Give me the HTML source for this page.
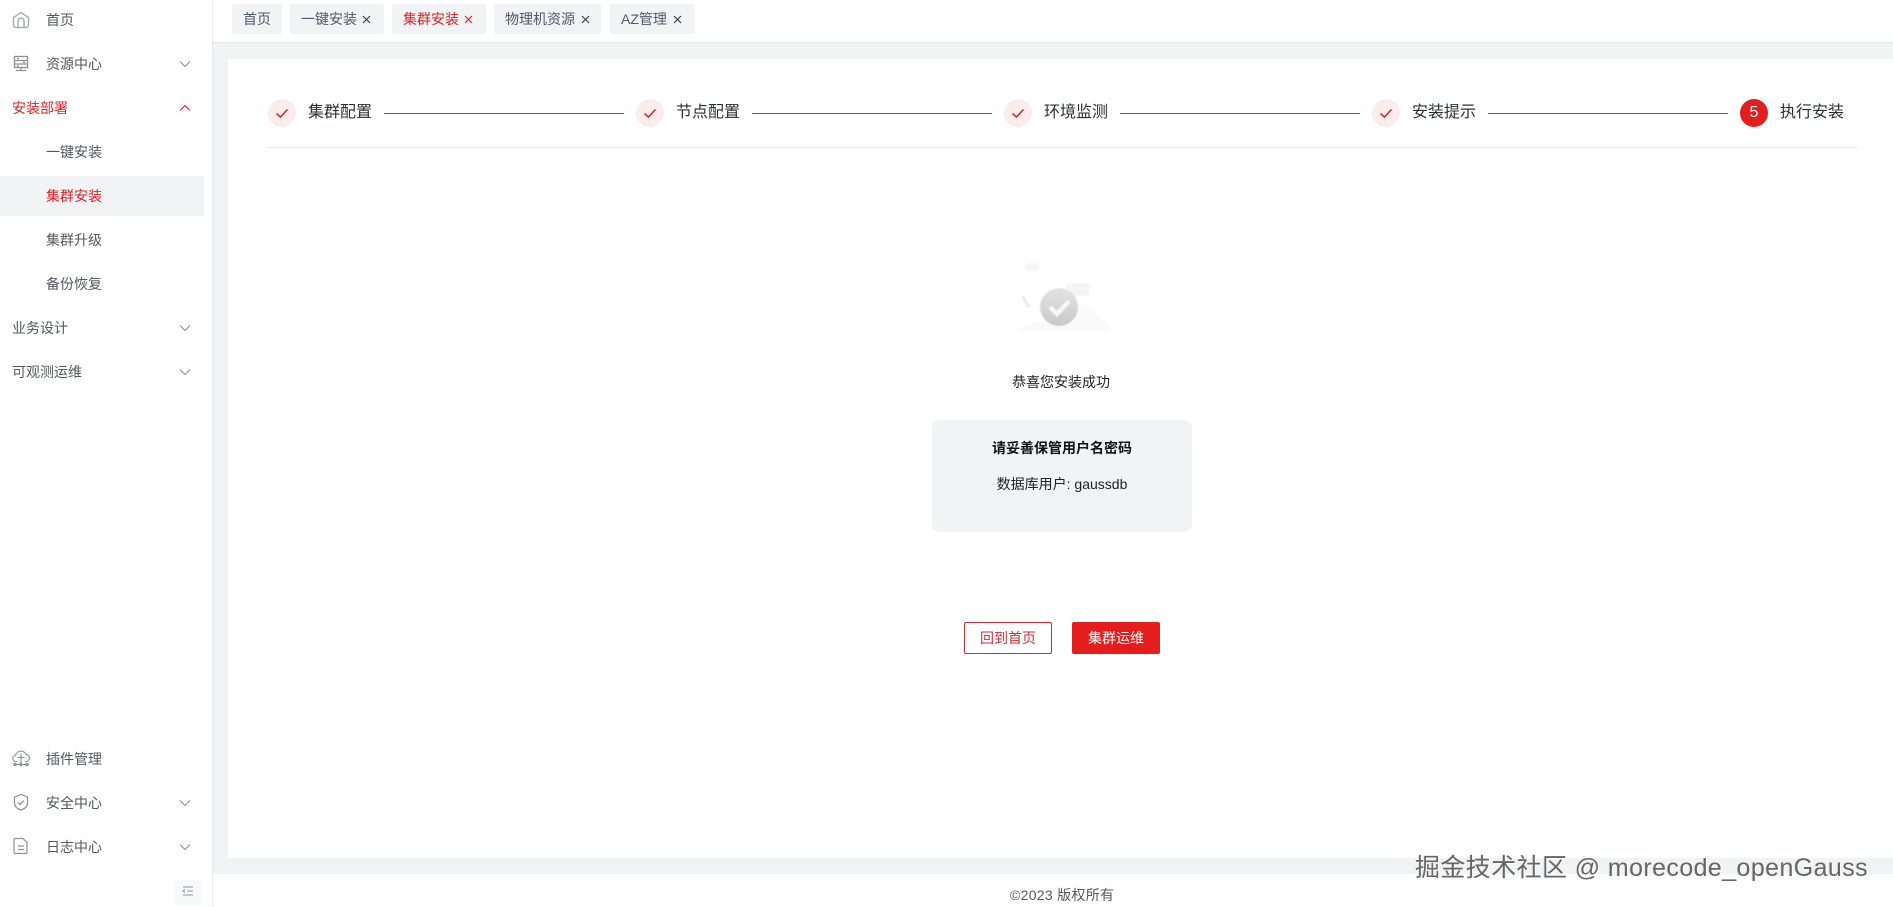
<!DOCTYPE html>
<html lang="zh"><head><meta charset="utf-8"><title>集群安装</title>
<style>
*{box-sizing:border-box}
html,body{margin:0;padding:0;width:1893px;height:907px;overflow:hidden;background:#fff;font-family:"Liberation Sans","Noto Sans CJK SC",sans-serif;font-size:14px;color:#54575f}
.a{position:absolute;white-space:nowrap}
.t{line-height:20px;height:20px}
.bg{position:absolute}
.tab{position:absolute;top:4px;height:30px;background:#f2f3f5;border-radius:2px;line-height:30px;color:#4e5969;padding-left:11px}
.tab svg{position:absolute;top:11px;width:9px;height:9px}
.c{position:absolute;top:99px;width:28px;height:28px;border-radius:50%;background:#fdecec}
.c svg{position:absolute;left:7px;top:7px;width:14px;height:14px}
.l{position:absolute;top:112.5px;height:1px;background:#c8323c}
.st{position:absolute;top:101px;font-size:16px;line-height:24px;color:#2b2f36;white-space:nowrap}
.ch{position:absolute;width:12px;height:8px}
.ic{position:absolute;width:18px;height:18px}
</style></head><body>
<!-- backgrounds -->
<div class="bg" style="left:212px;top:0;width:1px;height:907px;background:#e8eaed"></div>
<div class="bg" style="left:213px;top:42px;width:1680px;height:1px;background:#e6e8ea"></div>
<div class="bg" style="left:213px;top:43px;width:1680px;height:16px;background:#f2f3f5"></div>
<div class="bg" style="left:213px;top:43px;width:15px;height:831px;background:#f2f3f5"></div>
<div class="bg" style="left:213px;top:858px;width:1680px;height:16px;background:#f2f3f5"></div>

<!-- sidebar -->
<div class="bg" style="left:0;top:176px;width:204px;height:40px;background:#f2f3f5"></div>
<svg class="ic" style="left:12px;top:11px" viewBox="0 0 18 18" fill="none" stroke="#a0a4aa" stroke-width="1.300"><path d="M1.500 6.500 9 1.500l7.500 5V14a2.500 2.500 0 0 1-2.500 2.500H4A2.500 2.500 0 0 1 1.500 14z"/><path d="M6 16.500V10a3 3 0 0 1 6 0v6.500"/></svg>
<div class="a t" style="left:46px;top:10px">首页</div>
<svg class="ic" style="left:12px;top:55px" viewBox="0 0 18 18" fill="none" stroke="#8c9097" stroke-width="1.300"><rect x="2.500" y="1.500" width="13" height="11"/><path d="M2.500 5.500h13M2.500 9h13M9 12.500V15M4 15.500h10" /><path d="M5 3.500h2M11 7.300h2M5 11h2"/></svg>
<div class="a t" style="left:46px;top:54px">资源中心</div>
<svg class="ch" style="left:179px;top:60px" viewBox="0 0 12 8" fill="none" stroke="#8c9097" stroke-width="1.100"><path d="M1 1.500 6 6.500 11 1.500"/></svg>
<div class="a t" style="left:12px;top:98px;color:#d8232a">安装部署</div>
<svg class="ch" style="left:179px;top:104px" viewBox="0 0 12 8" fill="none" stroke="#d8232a" stroke-width="1.100"><path d="M1 6.500 6 1.500 11 6.500"/></svg>
<div class="a t" style="left:46px;top:142px">一键安装</div>
<div class="a t" style="left:46px;top:186px;color:#d8232a">集群安装</div>
<div class="a t" style="left:46px;top:230px">集群升级</div>
<div class="a t" style="left:46px;top:274px">备份恢复</div>
<div class="a t" style="left:12px;top:318px">业务设计</div>
<svg class="ch" style="left:179px;top:324px" viewBox="0 0 12 8" fill="none" stroke="#8c9097" stroke-width="1.100"><path d="M1 1.500 6 6.500 11 1.500"/></svg>
<div class="a t" style="left:12px;top:362px">可观测运维</div>
<svg class="ch" style="left:179px;top:368px" viewBox="0 0 12 8" fill="none" stroke="#8c9097" stroke-width="1.100"><path d="M1 1.500 6 6.500 11 1.500"/></svg>

<svg class="ic" style="left:12px;top:749px" viewBox="0 0 18 18" fill="none" stroke="#8c9097" stroke-width="1.100"><path d="M5 12.500H4a3 3 0 0 1-.500-6A5.500 5.500 0 0 1 14 5.500a3.500 3.500 0 0 1 0 7h-1"/><path d="M9 4.500V14M5.500 8.500h7M2 15.500h14"/><circle cx="3" cy="15.500" r="1.200"/><circle cx="9" cy="15.500" r="1.200"/><circle cx="15" cy="15.500" r="1.200"/></svg>
<div class="a t" style="left:46px;top:749px">插件管理</div>
<svg class="ic" style="left:12px;top:793px" viewBox="0 0 18 18" fill="none" stroke="#8c9097" stroke-width="1.200"><path d="M9 1.500 15.500 4v6c0 3.500-3 5.800-6.500 7C5.500 15.800 2.500 13.500 2.500 10V4z"/><path d="M6 9.500 8.300 11.500 12 7.500"/></svg>
<div class="a t" style="left:46px;top:793px">安全中心</div>
<svg class="ch" style="left:179px;top:799px" viewBox="0 0 12 8" fill="none" stroke="#8c9097" stroke-width="1.100"><path d="M1 1.500 6 6.500 11 1.500"/></svg>
<svg class="ic" style="left:12px;top:837px" viewBox="0 0 18 18" fill="none" stroke="#8c9097" stroke-width="1.200"><path d="M3.500 1.500H11l4 4V15a1.500 1.500 0 0 1-1.500 1.500h-10A1.500 1.500 0 0 1 2 15V3a1.500 1.500 0 0 1 1.500-1.500z"/><path d="M6 9h6M6 12.500h6"/></svg>
<div class="a t" style="left:46px;top:837px">日志中心</div>
<svg class="ch" style="left:179px;top:843px" viewBox="0 0 12 8" fill="none" stroke="#8c9097" stroke-width="1.100"><path d="M1 1.500 6 6.500 11 1.500"/></svg>
<div class="bg" style="left:175px;top:880px;width:26px;height:25px;background:#f7f8f9;border-radius:2px"></div>
<svg class="a" style="left:182px;top:885px;width:12px;height:12px" viewBox="0 0 12 12" fill="none" stroke="#8c9097" stroke-width="1"><path d="M1 2h10M5 6h6M1 10h10M3 4.500 1 6l2 1.500"/></svg>

<!-- tabs -->
<div class="tab" style="left:232px;width:50px">首页</div>
<div class="tab" style="left:290px;width:94px">一键安装<svg style="left:72px" viewBox="0 0 9 9" stroke="#3b3f46" stroke-width="1.200"><path d="M1 1 8 8M8 1 1 8"/></svg></div>
<div class="tab" style="left:392px;width:94px;color:#d8232a">集群安装<svg style="left:72px" viewBox="0 0 9 9" stroke="#d8232a" stroke-width="1.200"><path d="M1 1 8 8M8 1 1 8"/></svg></div>
<div class="tab" style="left:494px;width:107px">物理机资源<svg style="left:87px" viewBox="0 0 9 9" stroke="#3b3f46" stroke-width="1.200"><path d="M1 1 8 8M8 1 1 8"/></svg></div>
<div class="tab" style="left:610px;width:85px">AZ管理<svg style="left:63px" viewBox="0 0 9 9" stroke="#3b3f46" stroke-width="1.200"><path d="M1 1 8 8M8 1 1 8"/></svg></div>

<!-- steps -->
<div class="c" style="left:268px"><svg viewBox="0 0 14 14" fill="none" stroke="#d62c35" stroke-width="1.600"><path d="M1.500 7.500 5.500 11 12.500 3.500"/></svg></div>
<div class="st" style="left:308px">集群配置</div>
<div class="l" style="left:384px;width:240px"></div>
<div class="c" style="left:636px"><svg viewBox="0 0 14 14" fill="none" stroke="#d62c35" stroke-width="1.600"><path d="M1.500 7.500 5.500 11 12.500 3.500"/></svg></div>
<div class="st" style="left:676px">节点配置</div>
<div class="l" style="left:752px;width:240px"></div>
<div class="c" style="left:1004px"><svg viewBox="0 0 14 14" fill="none" stroke="#d62c35" stroke-width="1.600"><path d="M1.500 7.500 5.500 11 12.500 3.500"/></svg></div>
<div class="st" style="left:1044px">环境监测</div>
<div class="l" style="left:1120px;width:240px"></div>
<div class="c" style="left:1372px"><svg viewBox="0 0 14 14" fill="none" stroke="#d62c35" stroke-width="1.600"><path d="M1.500 7.500 5.500 11 12.500 3.500"/></svg></div>
<div class="st" style="left:1412px">安装提示</div>
<div class="l" style="left:1488px;width:240px"></div>
<div class="c" style="left:1740px;background:#e41d1d;color:#fff;text-align:center;font-size:16px;line-height:28px">5</div>
<div class="st" style="left:1780px">执行安装</div>
<div class="bg" style="left:268px;top:147px;width:1589px;height:1px;background:#e5e6e8"></div>

<!-- illustration -->
<svg class="a" style="left:1015px;top:260px;width:100px;height:76px;filter:blur(.6px)" viewBox="0 0 100 76">
<defs><linearGradient id="g" x1="0" y1="0" x2="0" y2="1"><stop offset="0" stop-color="#e4e4e4"/><stop offset="1" stop-color="#c8c8c8"/></linearGradient></defs>
<ellipse cx="17" cy="7" rx="8" ry="4" fill="#f5f5f5"/>
<path d="M2 70C12 62 22 62 30 62L62 46c8-4 18 4 22 12 6 2 10 6 12 10 0 2-4 4-10 4H10C5 72 2 71 2 70z" fill="#fafafa"/>
<rect x="52" y="23" width="22" height="13" rx="2" fill="#f4f4f4"/>
<path d="M8 36c2 6 4 9 7 11" stroke="#ececec" stroke-width="3" fill="none"/>
<circle cx="44" cy="47" r="19" fill="url(#g)"/>
<path d="M35 47 42 54 54 41" stroke="#f7f7f7" stroke-width="4.500" fill="none"/>
</svg>
<div class="a t" style="left:1012px;top:372px;color:#1d1f23">恭喜您安装成功</div>

<!-- box -->
<div class="bg" style="left:932px;top:420px;width:260px;height:112px;background:#f2f3f5;border-radius:8px"></div>
<div class="a t" style="left:932px;width:260px;top:438px;text-align:center;font-weight:700;color:#111">请妥善保管用户名密码</div>
<div class="a t" style="left:932px;width:260px;top:474px;text-align:center;color:#1d1f23">数据库用户: gaussdb</div>

<!-- buttons -->
<div class="a" style="left:964px;top:622px;width:88px;height:32px;border:1px solid #c8323c;border-radius:2px;color:#c8323c;text-align:center;line-height:30px;background:#fff">回到首页</div>
<div class="a" style="left:1072px;top:622px;width:88px;height:32px;border-radius:2px;background:#e41d1d;color:#fff;text-align:center;line-height:32px">集群运维</div>

<!-- footer -->
<div class="a t" style="left:1010px;top:885px;font-size:14px;letter-spacing:.3px;color:#55595f">©2023 版权所有</div>
<div class="a" style="left:1415px;top:853px;font-size:25px;line-height:30px;color:#666;letter-spacing:.4px;text-shadow:1px 1px 0 #fff,-1px 0 0 #e8e8e8">掘金技术社区 @ morecode_openGauss</div>
</body></html>
